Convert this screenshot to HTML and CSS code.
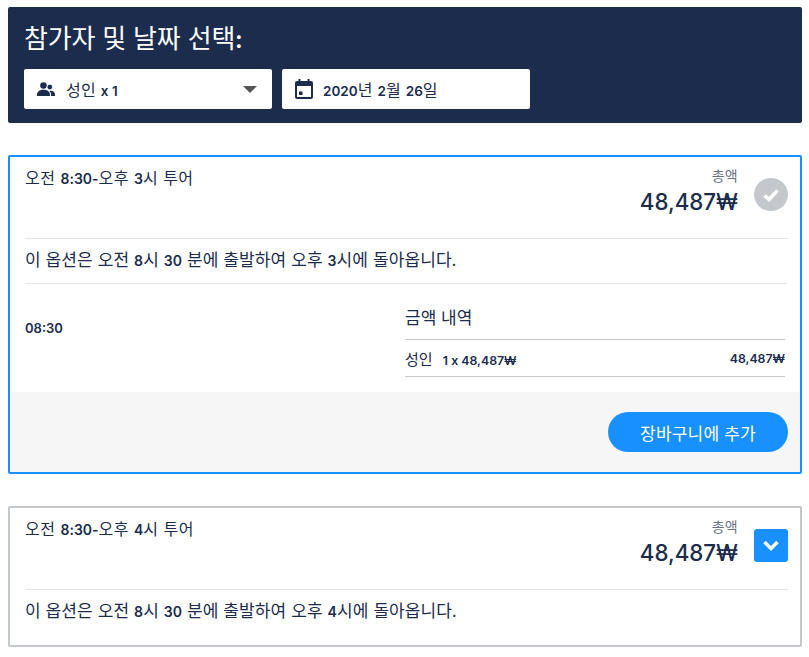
FILE: index.html
```html
<!DOCTYPE html>
<html lang="ko">
<head>
<meta charset="utf-8">
<title>참가자 및 날짜 선택</title>
<link rel="stylesheet" href="styles.css">
</head>
<body>
<section class="picker">
  <h1 class="picker-title">참가자 및 날짜 선택<b>:</b></h1>
  <div class="picker-fields">
    <div class="field">
      <svg class="icon-people" width="18" height="14" viewBox="0 0 18 14"><circle cx="6.500" cy="3.500" r="3.300" fill="#1b2c4d"/><path d="M0 13c0-3.500 2.800-5.300 6.500-5.300S13 9.500 13 13v1H0z" fill="#1b2c4d"/><circle cx="12.800" cy="5" r="2.800" fill="#1b2c4d" stroke="#fff" stroke-width=".8"/><path d="M14 14v-1.500c0-1.500-.6-2.800-1.700-3.600 3-.8 5.700.6 5.700 3.600V14z" fill="#1b2c4d"/></svg>
      <span class="field-text">성인 <b>x 1</b></span>
      <span class="caret"></span>
    </div>
    <div class="field">
      <svg class="icon-cal" width="18" height="20" viewBox="0 0 18 20"><path d="M3.500 0h2v2h7V0h2v2H16a2 2 0 0 1 2 2v14a2 2 0 0 1-2 2H2a2 2 0 0 1-2-2V4a2 2 0 0 1 2-2h1.500zM2 7v11h14V7z" fill="#1b2c4d"/><rect x="4" y="12.500" width="3.500" height="3.500" fill="#1b2c4d"/></svg>
      <span class="field-text"><b>2020</b>년 <b>2</b>월 <b>26</b>일</span>
    </div>
  </div>
</section>

<article class="option option-open">
  <div class="option-head">
    <div class="option-name">오전 <b>8:30-</b>오후 <b>3</b>시 투어</div>
    <div class="option-price">
      <div class="price-label">총액</div>
      <div class="price-value">48,487₩</div>
    </div>
    <span class="badge badge-check">
      <svg width="18" height="14" viewBox="0 0 18 14"><path d="M2.500 7.500l4.500 4 8.500-9" fill="none" stroke="#fff" stroke-width="3.600"/></svg>
    </span>
  </div>
  <p class="option-desc">이 옵션은 오전 <b>8</b>시 <b>30</b> 분에 출발하여 오후 <b>3</b>시에 돌아옵니다<b>.</b></p>
  <div class="option-detail">
    <div class="time">08:30</div>
    <div class="breakdown">
      <div class="breakdown-title">금액 내역</div>
      <div class="breakdown-row">
        <span>성인 <b class="row-calc">1 x 48,487₩</b></span>
        <b>48,487₩</b>
      </div>
    </div>
  </div>
  <div class="option-foot">
    <button class="add-btn" type="button">장바구니에 추가</button>
  </div>
</article>

<article class="option option-closed">
  <div class="option-head">
    <div class="option-name">오전 <b>8:30-</b>오후 <b>4</b>시 투어</div>
    <div class="option-price">
      <div class="price-label">총액</div>
      <div class="price-value">48,487₩</div>
    </div>
    <span class="badge badge-expand">
      <svg width="16" height="11" viewBox="0 0 16 11"><path d="M1.500 2l6.500 6.500L14.500 2" fill="none" stroke="#fff" stroke-width="3.400"/></svg>
    </span>
  </div>
  <p class="option-desc">이 옵션은 오전 <b>8</b>시 <b>30</b> 분에 출발하여 오후 <b>4</b>시에 돌아옵니다<b>.</b></p>
</article>
</body>
</html>
```

FILE: styles.css
```css
* { box-sizing: border-box; }
html, body { margin: 0; padding: 0; }
body {
  padding: 7px 7px 0 8px;
  background: #fff;
  color: #1b2c4d;
  font-family: Inter, "Noto Sans CJK KR", sans-serif;
  font-weight: 400;
  overflow: hidden;
}
b { font-weight: 600; font-size: 14px; }
.picker {
  height: 116px;
  padding: 15px 16px 0;
  background: #1b2c4d;
  border-radius: 2px;
}
.picker-title {
  height: 33px;
  margin: 0 0 14px;
  color: #fff;
  font-size: 26px;
  line-height: 33px;
  font-weight: 400;
  letter-spacing: -.2px;
}
.picker-title b { font-size: 24px; }
.picker-fields { display: flex; gap: 10px; }
.field {
  display: flex;
  align-items: center;
  width: 248px;
  height: 40px;
  padding: 0 13px;
  background: #fff;
  border-radius: 2px;
  font-size: 16px;
}
.icon-people { margin-right: 11px; }
.icon-cal { margin-right: 10px; }
.field-text { flex: 1; line-height: 24px; padding-top: 2px; letter-spacing: .3px; }
.field-text b { letter-spacing: 0; font-size: 13.500px; }
.caret {
  width: 0;
  height: 0;
  margin-right: 2px;
  border-left: 7px solid transparent;
  border-right: 7px solid transparent;
  border-top: 7px solid #555;
}
.option {
  margin-top: 32px;
  background: #fff;
  border: 2px solid #c4c7cc;
  border-radius: 2px;
  font-size: 16px;
}
.option-open {
  height: 319px;
  border-color: #1890ff;
}
.option-closed { height: 141px; }
.option-head {
  display: flex;
  align-items: flex-start;
  height: 82px;
  margin: 0 12px 0 15px;
  padding-top: 9px;
  border-bottom: 1px solid #e6e6e6;
}
.option-name { flex: 1; line-height: 24px; letter-spacing: .5px; }
.option-name b { letter-spacing: 0; }
.option-price { text-align: right; margin-right: 16px; }
.price-label { color: #6b7280; font-size: 14px; line-height: 20px; letter-spacing: .3px; }
.price-value { font-size: 22.300px; font-weight: 500; line-height: 28px; margin-top: 2px; }
.badge {
  display: flex;
  align-items: center;
  justify-content: center;
  width: 34px;
  height: 33px;
  margin-top: 12px;
}
.badge-check { background: #c4c7cc; border-radius: 50%; }
.badge-expand { background: #1890ff; border-radius: 3px; }
.option-desc {
  margin: 0 13px 0 15px;
  padding: 8px 0;
  height: 45px;
  font-size: 17px;
  line-height: 26px;
  letter-spacing: .1px;
  border-bottom: 1px solid #e6e6e6;
}
.option-closed .option-desc { border-bottom: 0; }
.option-detail {
  display: flex;
  height: 108px;
  margin: 0 15px;
}
.time { width: 380px; padding-top: 33px; font-size: 13px; font-weight: 600; line-height: 22px; }
.breakdown { width: 380px; padding-top: 22px; }
.breakdown-title {
  height: 34px;
  font-size: 17px;
  line-height: 24px;
  border-bottom: 1px solid #c4c7cc;
}
.breakdown-row {
  display: flex;
  justify-content: space-between;
  align-items: center;
  height: 37px;
  font-size: 15px;
  border-bottom: 1px solid #c4c7cc;
}
.breakdown-row b { font-size: 12.300px; }
.row-calc { margin-left: 6px; }
.option-foot {
  display: flex;
  justify-content: flex-end;
  align-items: flex-start;
  height: 80px;
  padding: 20px 12px 0 0;
  background: #f6f6f6;
}
.add-btn {
  width: 180px;
  height: 40px;
  border: 0;
  border-radius: 20px;
  background: #1890ff;
  color: #fff;
  font: 400 17px Inter, "Noto Sans CJK KR", sans-serif;
  letter-spacing: .2px;
}
```
